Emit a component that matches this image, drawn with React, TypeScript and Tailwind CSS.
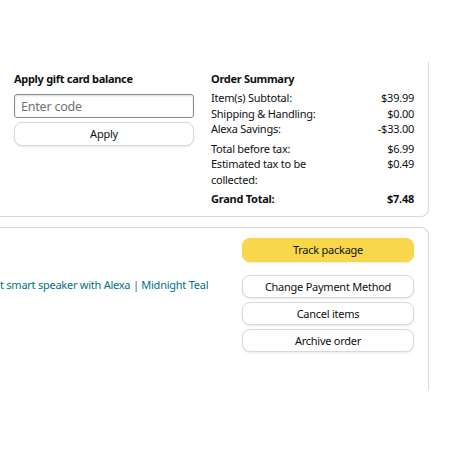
import React from "react";

const ROWS_A = [
  { label: "Item(s) Subtotal:", value: "$39.99" },
  { label: "Shipping & Handling:", value: "$0.00" },
  { label: "Alexa Savings:", value: "-$33.00" },
];

const ROWS_B = [
  { label: "Total before tax:", value: "$6.99" },
  { label: "Estimated tax to be collected:", value: "$0.49" },
];

function SummaryRow({ label, value, bold }: { label: string; value: string; bold?: boolean }) {
  return (
    <div className={"flex items-start justify-between " + (bold ? "font-bold" : "")}>
      <span className="w-[118px]">{label}</span>
      <span className="text-right">{value}</span>
    </div>
  );
}

const btn =
  "flex h-[23px] w-full items-center justify-center rounded-lg border border-[#d5d9d9] bg-white text-[11px] text-[#0f1111] shadow-[0_1px_2px_rgba(213,217,217,0.5)]";

export default function App() {
  return (
    <div className="h-[450px] w-[450px] overflow-hidden bg-white font-['Noto_Sans',sans-serif] text-[11px] leading-[15.5px] tracking-[-0.25px] text-[#0f1111]">
      <div className="pt-[62px]">
        {/* gift card + order summary */}
        <div className="flex h-[155px] w-[429px] rounded-br-lg border-r border-b border-[#d5d9d9] pt-[9px]">
          <div className="ml-[14px] w-[180px]">
            <h3 className="text-[11px] font-bold leading-4 tracking-[-0.3px]">Apply gift card balance</h3>
            <input
              type="text"
              placeholder="Enter code"
              className="mt-[7px] h-[24px] w-full rounded-[3px] border border-[#888c8c] px-[6px] text-[12.5px] tracking-[-0.2px] shadow-[inset_0_1px_2px_rgba(15,17,17,0.15)] outline-none placeholder:text-[#6f7373]"
            />
            <button type="button" className={btn + " mt-[4px] h-[24px] text-[11.5px]"}>
              Apply
            </button>
          </div>

          <div className="ml-[17px] w-[203px]">
            <h3 className="text-[11px] font-bold leading-4 tracking-[-0.3px]">Order Summary</h3>
            <div className="mt-[3px]">
              {ROWS_A.map((r) => (
                <SummaryRow key={r.label} {...r} />
              ))}
            </div>
            <div className="mt-[4px]">
              {ROWS_B.map((r) => (
                <SummaryRow key={r.label} {...r} />
              ))}
            </div>
            <div className="mt-[4px]">
              <SummaryRow label="Grand Total:" value="$7.48" bold />
            </div>
          </div>
        </div>

        {/* shipment card */}
        <div className="mt-[10px] flex h-[163px] w-[429px] rounded-tr-lg border-t border-r border-[#d5d9d9] pt-[10px]">
          <div className="flex-1 pt-[39px]">
            <a href="#" className="whitespace-nowrap text-[11px] text-[#007185]">
              t smart speaker with Alexa | Midnight Teal
            </a>
          </div>
          <div className="mr-[14px] flex w-[172px] flex-col">
            <button
              type="button"
              className="flex h-[24px] w-full items-center justify-center rounded-lg bg-[#f8d84a] text-[11px] text-[#0f1111] shadow-[0_1px_2px_rgba(213,217,217,0.5)]"
            >
              Track package
            </button>
            <div className="mt-[13px] flex flex-col gap-[4px]">
              <button type="button" className={btn}>
                Change Payment Method
              </button>
              <button type="button" className={btn}>
                Cancel items
              </button>
              <button type="button" className={btn}>
                Archive order
              </button>
            </div>
          </div>
        </div>
      </div>
    </div>
  );
}
